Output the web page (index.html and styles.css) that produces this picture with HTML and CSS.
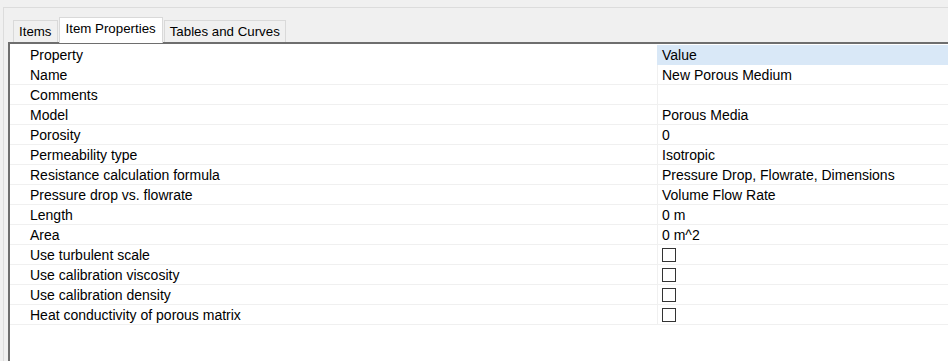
FILE: index.html
```html
<!DOCTYPE html>
<html lang="en">
<head>
  <meta charset="UTF-8" />
  <title>Item Properties</title>
  <link rel="stylesheet" href="styles.css">
</head>
<body>

<div class="panel">
  <div class="tabs">
    <div class="tab">Items</div>
    <div class="tab active">Item Properties</div>
    <div class="tab">Tables and Curves</div>
  </div>

  <div class="pane">
    <div class="row head">
      <div class="prop">Property</div>
      <div class="val">Value</div>
    </div>
    <div class="row"><div class="prop">Name</div><div class="val">New Porous Medium</div></div>
    <div class="row"><div class="prop">Comments</div><div class="val"></div></div>
    <div class="row"><div class="prop">Model</div><div class="val">Porous Media</div></div>
    <div class="row"><div class="prop">Porosity</div><div class="val">0</div></div>
    <div class="row"><div class="prop">Permeability type</div><div class="val">Isotropic</div></div>
    <div class="row"><div class="prop">Resistance calculation formula</div><div class="val">Pressure Drop, Flowrate, Dimensions</div></div>
    <div class="row"><div class="prop">Pressure drop vs. flowrate</div><div class="val">Volume Flow Rate</div></div>
    <div class="row"><div class="prop">Length</div><div class="val">0 m</div></div>
    <div class="row"><div class="prop">Area</div><div class="val">0 m^2</div></div>
    <div class="row"><div class="prop">Use turbulent scale</div><div class="val"><span class="check"></span></div></div>
    <div class="row"><div class="prop">Use calibration viscosity</div><div class="val"><span class="check"></span></div></div>
    <div class="row"><div class="prop">Use calibration density</div><div class="val"><span class="check"></span></div></div>
    <div class="row"><div class="prop">Heat conductivity of porous matrix</div><div class="val"><span class="check"></span></div></div>
  </div>
</div>

</body>
</html>
```

FILE: styles.css
```css
html, body {
  height: 100%;
}
body {
  margin: 0;
  background-color: #f0f0f0;
  font-family: "Liberation Sans", Arial, sans-serif;
  font-size: 14px;
  color: #000;
  overflow: hidden;
}
.panel {
  margin: 7px 0 0 3px;
  height: calc(100% - 7px);
  box-sizing: border-box;
  border-top: 1px solid #dcdcdc;
  border-left: 1px solid #dcdcdc;
  padding-left: 4px;
  display: flex;
  flex-direction: column;
}
.tabs {
  display: flex;
  align-items: flex-end;
  padding: 9px 0 0 5px;
  height: 34px;
  box-sizing: border-box;
}
.tab {
  height: 22px;
  line-height: 22px;
  padding: 0 5px;
  border: 1px solid #d9d9d9;
  border-bottom: none;
  box-sizing: border-box;
  background: #f0f0f0;
  margin-right: 1px;
  font-size: 13.3px;
}
.tab.active {
  height: 26px;
  line-height: 22px;
  background: #fff;
  padding: 0 6px;
  margin: 0 1px 0 0;
  position: relative;
  top: 1px;
}
.pane {
  flex: 1;
  background: #fff;
  border-top: 2px solid #6e6e6e;
  border-left: 2px solid #6e6e6e;
  padding-top: 1px;
}
.row {
  display: flex;
  height: 20px;
  line-height: 20px;
  border-bottom: 1px solid #f0f0f0;
  box-sizing: border-box;
}
.row.head {
  border-bottom: none;
  line-height: 21px;
}
.prop {
  width: 627px;
  padding-left: 20px;
  white-space: nowrap;
}
.val {
  flex: 1;
  border-left: 1px solid #f0f0f0;
  padding-left: 4px;
  white-space: nowrap;
}
.head .val {
  background: #d9e8f7;
  border-left-color: #d9e8f7;
}
.check {
  display: inline-block;
  width: 14px;
  height: 14px;
  border: 1px solid #333;
  box-sizing: border-box;
  vertical-align: -2px;
}
```
